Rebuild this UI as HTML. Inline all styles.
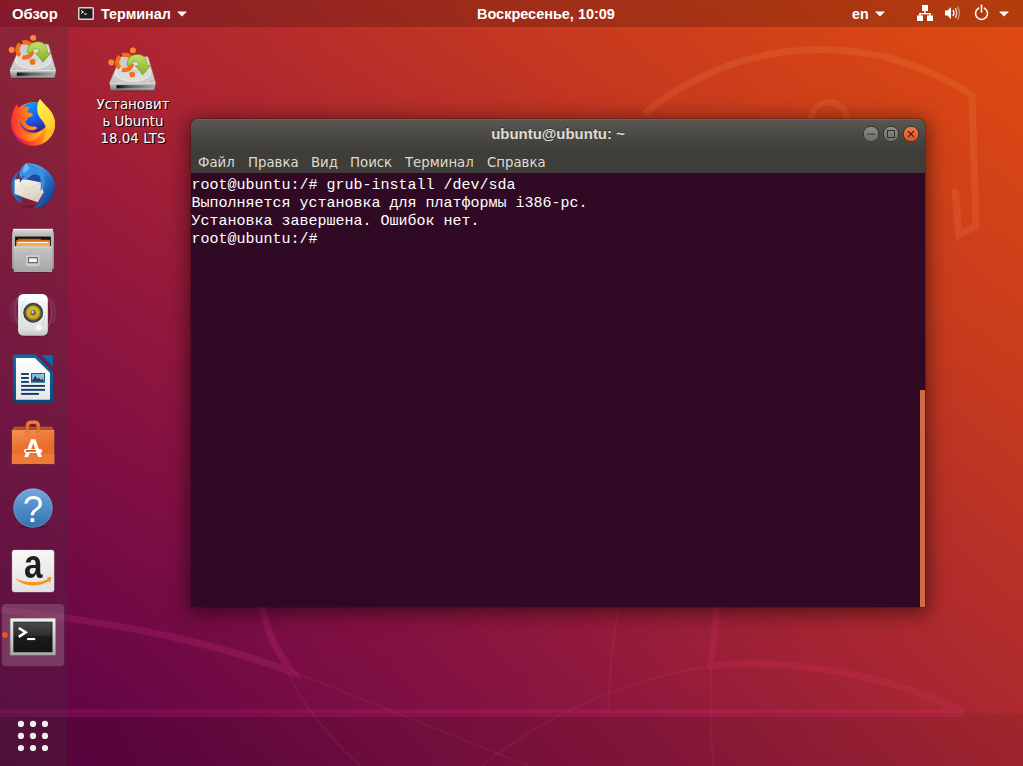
<!DOCTYPE html>
<html lang="ru">
<head>
<meta charset="utf-8">
<title>Ubuntu</title>
<style>
html,body{margin:0;padding:0;}
body{width:1023px;height:766px;overflow:hidden;position:relative;font-family:"Liberation Sans","DejaVu Sans",sans-serif;background:#8a1838;}
#bg{position:absolute;left:0;top:0;width:1023px;height:766px;
background:linear-gradient(to bottom right,rgba(255,0,90,0.05) 0%,rgba(255,0,90,0) 50%,rgba(255,110,0,0.05) 100%),linear-gradient(to top right,#5c0542 0%,#660644 9%,#7a0d44 22%,#8b153f 34%,#a42333 50%,#c63a1e 75%,#e24c10 100%);}
#fold2{position:absolute;left:0;top:713px;width:1023px;height:53px;background:linear-gradient(to right,rgba(0,0,0,0.12),rgba(0,0,0,0.07));}
#topbar{position:absolute;left:0;top:0;width:1023px;height:26.6px;background:rgba(0,0,0,0.2);color:#fff;font-weight:bold;font-size:14.5px;}
#topbar span{position:absolute;top:0;line-height:28.6px;white-space:nowrap;}
#topbar svg{position:absolute;}
#dock{position:absolute;left:0;top:26.6px;width:66px;height:740px;background:rgba(68,52,58,0.25);border-right:1px solid rgba(40,40,40,0.12);}
.ico{position:absolute;left:9px;width:48px;height:48px;overflow:visible;}
#hl{position:absolute;left:2px;top:604px;width:62px;height:62px;border-radius:4px;background:rgba(255,255,255,0.17);}
#dot{position:absolute;left:2px;top:632px;width:6px;height:6px;border-radius:3px;background:#e95420;}
#desk{position:absolute;left:83px;top:96px;width:100px;text-align:center;color:#fff;font-family:"DejaVu Sans","Liberation Sans",sans-serif;font-size:13.4px;line-height:17px;text-shadow:1px 1px 0 rgba(0,0,0,0.9),0 0 2px rgba(0,0,0,0.5);}
#win{position:absolute;left:191px;top:119px;width:734px;height:488px;border-radius:6px 6px 0 0;box-shadow:0 3px 20px 3px rgba(0,0,0,0.5),0 0 0 1px rgba(40,20,20,0.25);background:#300a24;overflow:hidden;}
#title{position:absolute;left:0;top:0;width:734px;height:32px;background:linear-gradient(#5a5851 0%,#4a4843 55%,#3e3d39 100%);box-shadow:inset 0 1px 0 rgba(255,255,255,0.08);}
#title .t{position:absolute;left:0;width:734px;top:0;line-height:30px;text-align:center;color:#dfdbd2;font-weight:bold;font-size:14.96px;text-shadow:0 -1px 0 rgba(0,0,0,0.4);}
.wb{position:absolute;top:6px;width:18px;height:18px;}
#menu{position:absolute;left:0;top:31px;width:734px;height:23px;background:#3e3d39;color:#dfdbd2;font-family:"DejaVu Sans","Liberation Sans",sans-serif;font-size:13.3px;}
#menu span{position:absolute;top:0;line-height:26px;white-space:nowrap;}
#term{position:absolute;left:0;top:54px;width:734px;height:434px;background:#300a24;color:#fff;font-family:"Liberation Mono","DejaVu Sans Mono",monospace;font-size:15px;}
#term div{position:absolute;left:0.5px;height:18px;line-height:18px;white-space:pre;}
#scroll{position:absolute;left:729px;top:271px;width:5px;height:217px;background:#cf6a48;}
</style>
</head>
<body>
<div id="bg"></div>
<div id="fold2"></div>
<svg id="beaver" style="position:absolute;left:0;top:0" width="1023" height="766" viewBox="0 0 1023 766">
<g fill="none" stroke="#ffb060" opacity="0.13" stroke-width="7" stroke-linejoin="miter">
<path d="M644,114 A274.75,274.75 0 0 1 972,95 L976,226 L959,235 L955,189"/>
<circle cx="829" cy="120" r="18" stroke-width="6"/>
</g>
<g fill="none" stroke="#f83878" opacity="0.14" stroke-width="7">
<path d="M717,606 L711,666 C800,656 900,680 963,712"/>
<path d="M0,713.2 H963" stroke-width="7.8" stroke="#ff30a0"/>
<path d="M0,610 C120,622 220,645 292,672 C275,650 266,628 262,606" stroke="#ff4aa0"/>
</g>
<g fill="none" stroke="#ffb090" stroke-opacity="0.06" stroke-width="2">
<path d="M292,671 L529,766"/>
<path d="M288,673 C300,700 330,740 361,766"/>
<path d="M482,766 C530,728 600,685 709,666"/>
<path d="M619,607 C612,640 609,680 609,709"/>
<path d="M711,668 C710,700 711,740 713,766"/>
</g>
</svg>

<div id="topbar">
<span style="left:12px;font-size:14.86px">Обзор</span>
<svg style="left:78px;top:7px" width="16" height="13" viewBox="0 0 16 13"><rect x="0" y="0" width="16" height="13" rx="1.5" fill="#d6d6d2"/><rect x="1.5" y="1.5" width="13" height="10" fill="#1c1c1c"/><path d="M3 3.5 L5.5 5 L3 6.5" stroke="#fff" stroke-width="1" fill="none"/><rect x="6" y="6.5" width="3" height="1" fill="#fff"/></svg>
<span style="left:101px;font-size:14.39px">Терминал</span>
<svg style="left:177px;top:11px" width="10" height="6" viewBox="0 0 10 6"><path d="M0 0.5 H10 L5 5.5 Z" fill="#fff"/></svg>
<span style="left:477px;font-size:14.48px">Воскресенье, 10:09</span>
<span style="left:852px;font-size:14.2px">en</span>
<svg style="left:875px;top:11px" width="10" height="6" viewBox="0 0 10 6"><path d="M0 0.5 H10 L5 5.5 Z" fill="#fff"/></svg>
<svg style="left:917px;top:5px" width="16" height="16" viewBox="0 0 16 16"><g fill="#fff"><rect x="5" y="0" width="6" height="6"/><rect x="7.3" y="6" width="1.4" height="3"/><rect x="2.3" y="8" width="11.4" height="1.4"/><rect x="2.3" y="8" width="1.4" height="3"/><rect x="12.3" y="8" width="1.4" height="3"/><rect x="0" y="10.5" width="6" height="5.5"/><rect x="10" y="10.5" width="6" height="5.5"/></g></svg>
<svg style="left:944px;top:5px" width="17" height="16" viewBox="0 0 17 16"><path d="M1 5.5 H3.5 L7 2 V14 L3.5 10.5 H1 Z" fill="#fff"/><path d="M9 5 Q10.8 8 9 11" stroke="#fff" stroke-width="1.4" fill="none"/><path d="M11.3 3.2 Q14 8 11.3 12.8" stroke="#fff" stroke-width="1.4" fill="none" opacity="0.8"/><path d="M13.6 1.6 Q17.2 8 13.6 14.4" stroke="#fff" stroke-width="1.3" fill="none" opacity="0.45"/></svg>
<svg style="left:973px;top:4px" width="17" height="17" viewBox="0 0 17 17"><path d="M5.6 4.2 A6 6 0 1 0 11.4 4.2" stroke="#fff" stroke-width="1.6" fill="none" stroke-linecap="round"/><path d="M8.5 1.2 V8" stroke="#fff" stroke-width="1.6" stroke-linecap="round"/></svg>
<svg style="left:999px;top:11px" width="10" height="6" viewBox="0 0 10 6"><path d="M0 0.5 H10 L5 5.5 Z" fill="#fff"/></svg>
</div>

<div id="dock">

</div>

<!--ICONS-START-->
<svg id="dockicons" style="position:absolute;left:0;top:0" width="66" height="766" viewBox="0 0 66 766">
<defs>
<linearGradient id="dTop" x1="0" y1="0" x2="0" y2="1"><stop offset="0" stop-color="#e2e2e2"/><stop offset="1" stop-color="#c6c6c6"/></linearGradient>
<linearGradient id="dFront" x1="0" y1="0" x2="0" y2="1"><stop offset="0" stop-color="#d0d0d0"/><stop offset="1" stop-color="#777"/></linearGradient>
<linearGradient id="dSlot" x1="0" y1="0" x2="1" y2="0"><stop offset="0" stop-color="#0a0a0a"/><stop offset="0.35" stop-color="#5a5a5a"/><stop offset="1" stop-color="#a4a4a4"/></linearGradient>
<linearGradient id="gArrow" x1="0" y1="0" x2="0" y2="1"><stop offset="0" stop-color="#c6e06a"/><stop offset="1" stop-color="#7fb02a"/></linearGradient>
<linearGradient id="ffBody" x1="0.95" y1="0.25" x2="0.05" y2="0.75"><stop offset="0" stop-color="#fff04a"/><stop offset="0.3" stop-color="#ffae1f"/><stop offset="0.6" stop-color="#ff681f"/><stop offset="0.85" stop-color="#fa2a3a"/><stop offset="1" stop-color="#d81488"/></linearGradient>
<linearGradient id="ffGlobe" x1="0.3" y1="0" x2="0.6" y2="1"><stop offset="0" stop-color="#0a9bff"/><stop offset="0.55" stop-color="#1560f0"/><stop offset="1" stop-color="#3a1c8a"/></linearGradient>
<linearGradient id="ffHead" x1="0" y1="0.5" x2="1" y2="0.5"><stop offset="0" stop-color="#ff2a34"/><stop offset="0.5" stop-color="#ff7a1a"/><stop offset="1" stop-color="#ffc02a"/></linearGradient>
<linearGradient id="ffFlame" x1="0.3" y1="0" x2="0.7" y2="1"><stop offset="0" stop-color="#fff44f"/><stop offset="0.6" stop-color="#ffd52e"/><stop offset="1" stop-color="#ffa51f"/></linearGradient>
<linearGradient id="tbBody" x1="0.15" y1="0.1" x2="0.85" y2="0.9"><stop offset="0" stop-color="#5fb4ee"/><stop offset="0.5" stop-color="#2a78cc"/><stop offset="1" stop-color="#123a8a"/></linearGradient>
<linearGradient id="tbEnv" x1="0" y1="0" x2="0.4" y2="1"><stop offset="0" stop-color="#faf7f0"/><stop offset="1" stop-color="#d9d0c2"/></linearGradient>
<linearGradient id="flBack" x1="0" y1="0" x2="0" y2="1"><stop offset="0" stop-color="#dcdcdc"/><stop offset="0.14" stop-color="#bdbdbd"/><stop offset="1" stop-color="#9a9a9a"/></linearGradient>
<linearGradient id="flFront" x1="0" y1="0" x2="0" y2="1"><stop offset="0" stop-color="#c4c4c4"/><stop offset="1" stop-color="#a6a6a6"/></linearGradient>
<linearGradient id="flFold" x1="0" y1="0" x2="0" y2="1"><stop offset="0" stop-color="#d8731a"/><stop offset="0.5" stop-color="#f3a03a"/><stop offset="1" stop-color="#f7bd66"/></linearGradient>
<linearGradient id="rbBody" x1="0" y1="0" x2="0" y2="1"><stop offset="0" stop-color="#fafafa"/><stop offset="0.5" stop-color="#ececea"/><stop offset="0.85" stop-color="#dededc"/><stop offset="1" stop-color="#c4c4c2"/></linearGradient>
<radialGradient id="rbCone" cx="0.5" cy="0.45" r="0.6"><stop offset="0" stop-color="#f0d83a"/><stop offset="0.7" stop-color="#c9a80f"/><stop offset="1" stop-color="#8a7208"/></radialGradient>
<linearGradient id="lwPaper" x1="0" y1="0" x2="0" y2="1"><stop offset="0" stop-color="#ffffff"/><stop offset="1" stop-color="#e6e6e6"/></linearGradient>
<linearGradient id="lwBlue" x1="0" y1="0" x2="0" y2="1"><stop offset="0" stop-color="#0d6aa6"/><stop offset="1" stop-color="#074a7c"/></linearGradient>
<linearGradient id="swBag" x1="0" y1="0" x2="0.3" y2="1"><stop offset="0" stop-color="#f3924f"/><stop offset="0.6" stop-color="#e96f2b"/><stop offset="1" stop-color="#e7692a"/></linearGradient>
<linearGradient id="swHandle" x1="0" y1="0" x2="0" y2="1"><stop offset="0" stop-color="#ee7e40"/><stop offset="0.55" stop-color="#e8682a"/><stop offset="1" stop-color="#f08a52"/></linearGradient>
<linearGradient id="hpBody" x1="0" y1="0" x2="0" y2="1"><stop offset="0" stop-color="#79a6de"/><stop offset="0.5" stop-color="#4f8cc6"/><stop offset="1" stop-color="#3672a8"/></linearGradient>
<linearGradient id="amBody" x1="0" y1="0" x2="0.2" y2="1"><stop offset="0" stop-color="#fafafa"/><stop offset="0.6" stop-color="#ececec"/><stop offset="1" stop-color="#e2e2e2"/></linearGradient>
<linearGradient id="tmFrame" x1="0" y1="0" x2="0" y2="1"><stop offset="0" stop-color="#f2f2f0"/><stop offset="1" stop-color="#a9a9a6"/></linearGradient>
<linearGradient id="tmScreen" x1="0" y1="0" x2="0" y2="1"><stop offset="0" stop-color="#4a4a4a"/><stop offset="0.45" stop-color="#2c2c2c"/><stop offset="0.46" stop-color="#1c1c1c"/><stop offset="1" stop-color="#141414"/></linearGradient>
</defs>
<g transform="translate(0,27) scale(0.086162)">
<ellipse cx="385" cy="590" rx="265" ry="14" fill="#000" opacity="0.25"/>
<polygon points="245,200 560,200 648,500 115,500" fill="url(#dTop)" stroke="#a8a8a8" stroke-width="4"/>
<ellipse cx="385" cy="385" rx="205" ry="100" fill="#dcdcdc" stroke="#f6f6f6" stroke-width="8"/>
<ellipse cx="385" cy="375" rx="60" ry="28" fill="#cfcfcf"/>
<circle cx="165" cy="490" r="7" fill="#888"/><circle cx="600" cy="490" r="7" fill="#888"/><circle cx="545" cy="215" r="6" fill="#999"/>
<polygon points="115,500 648,500 638,592 128,592" fill="url(#dFront)"/>
<rect x="195" y="528" width="425" height="48" fill="url(#dSlot)"/>
<rect x="195" y="566" width="425" height="10" fill="#c8c8c8" opacity="0.7"/>
<rect x="115" y="498" width="533" height="8" fill="#ececec"/>
<g fill="#f26e1a">
 <circle cx="290" cy="265" r="62" fill="#cdcdcd"/><circle cx="290" cy="265" r="88" fill="none" stroke="#f26e1a" stroke-width="50" stroke-dasharray="154 30.3" transform="rotate(9.9 290 265)"/>
 <circle cx="135" cy="265" r="33"/><circle cx="385" cy="125" r="33"/><circle cx="378" cy="405" r="33"/>
</g>
<circle cx="135" cy="265" r="33" fill="#f58a3c"/><circle cx="385" cy="125" r="33" fill="#f58a3c"/>
<path d="M316,300 C316,215 368,172 440,172 C512,172 550,228 550,300 L592,300 L500,408 L410,300 L452,300 C452,268 442,250 422,250 C394,250 372,268 366,300 Z" fill="url(#gArrow)" stroke="#6f9a22" stroke-width="7" stroke-linejoin="round"/>
</g>
<g transform="translate(0,90) scale(0.086162)">
<circle cx="385" cy="395" r="253" fill="url(#ffBody)"/>
<circle cx="392" cy="318" r="176" fill="url(#ffGlobe)"/>
<path d="M195,165 C205,200 215,215 240,215 C270,195 310,190 350,200 C330,215 318,235 322,262 C345,262 372,268 384,288 C372,310 345,318 322,318 C322,340 310,352 292,362 C300,395 330,420 368,425 C395,428 418,422 432,440 C410,462 370,475 330,462 C280,445 240,400 236,350 C225,420 270,490 340,505 C395,516 450,500 490,460 C470,560 380,610 300,585 C200,555 130,470 130,370 C130,290 160,215 195,165 Z" fill="url(#ffHead)"/>
<path d="M465,105 C500,150 560,200 605,280 C650,360 650,450 600,525 C570,570 520,610 480,622 C540,560 560,480 520,400 C500,360 470,335 450,300 C430,265 428,200 440,150 C445,135 455,118 465,105 Z" fill="url(#ffFlame)"/>
<path d="M520,400 C548,455 545,520 500,590 C560,560 610,500 625,430 C600,480 560,470 520,400 Z" fill="#ffb81f" opacity="0.9"/>
</g>
<g transform="translate(0,154) scale(0.086162)">
<ellipse cx="385" cy="610" rx="150" ry="14" fill="#000" opacity="0.18"/>
<path d="M300,108 C420,100 560,160 620,290 C665,400 620,540 500,600 C460,622 420,632 385,630 C440,585 470,540 485,490 L505,440 C470,300 400,230 300,108 Z" fill="url(#tbBody)"/>
<path d="M225,185 C150,240 120,330 135,420 C150,490 190,540 245,570 C235,540 235,520 245,505 C200,470 170,420 175,350 C180,290 200,230 225,185 Z" fill="#2a6cc0"/>
<ellipse cx="390" cy="300" rx="135" ry="110" fill="#1c4a9c"/>
<polygon points="170,300 250,285 480,330 505,445 440,560 290,512 168,462" fill="url(#tbEnv)"/>
<path d="M228,318 L300,418 L478,335" fill="none" stroke="#c9c0b0" stroke-width="6"/>
<path d="M300,418 L440,555" fill="none" stroke="#d6cebf" stroke-width="4"/>
<path d="M300,108 C260,140 225,185 222,240 C220,275 228,300 240,318 L250,300 C290,300 330,285 352,258 C380,235 420,230 450,250 C470,262 480,300 470,430 C520,380 540,300 500,220 C460,150 380,112 300,108 Z" fill="#3b8fe0"/>
<path d="M300,108 C275,150 262,190 270,222 C300,215 330,190 345,160 Z" fill="#7cc4f5" opacity="0.8"/>
<path d="M222,240 L232,330 L262,290 Z" fill="#1d4f9c"/>
<circle cx="270" cy="262" r="11" fill="#5a1a10"/><circle cx="272" cy="260" r="5" fill="#e8a020"/>
<path d="M180,480 C200,520 225,550 250,570 C248,545 255,520 270,505 Z" fill="#1f56a8"/>
</g>
<g transform="translate(0,218) scale(0.086162)">
<ellipse cx="385" cy="628" rx="235" ry="10" fill="#000" opacity="0.25"/>
<path d="M155,125 H610 L625,185 V590 H140 V185 Z" fill="url(#flBack)"/>
<rect x="150" y="128" width="465" height="10" fill="#efefef"/>
<rect x="175" y="215" width="415" height="118" fill="#141414"/>
<polygon points="215,240 470,240 480,252 575,252 575,332 205,332 205,252" fill="#c75a12"/>
<rect x="188" y="258" width="392" height="75" fill="url(#flFold)"/>
<rect x="205" y="278" width="355" height="14" fill="#fff6e6"/>
<rect x="160" y="330" width="446" height="298" rx="6" fill="url(#flFront)"/>
<rect x="160" y="330" width="446" height="14" fill="#d8d8d8"/>
<rect x="300" y="430" width="162" height="130" rx="20" fill="#cfcfcf" stroke="#b4b4b4" stroke-width="4"/>
<rect x="326" y="456" width="112" height="68" rx="6" fill="#4a4a4a"/>
<rect x="336" y="466" width="92" height="48" rx="3" fill="#f4f4f4"/>
</g>
<g transform="translate(0,282) scale(0.086162)">
<g fill="none" stroke="#8fa8d8" stroke-width="10" opacity="0.5">
<path d="M255,115 C160,200 160,420 225,520"/><path d="M205,175 C140,260 140,400 190,480" opacity="0.7"/><path d="M150,235 C105,300 105,400 150,470" opacity="0.5"/>
<path d="M545,170 C620,260 620,420 560,520"/><path d="M590,200 C655,290 655,400 610,480" opacity="0.7"/>
</g>
<ellipse cx="385" cy="622" rx="165" ry="12" fill="#000" opacity="0.28"/>
<rect x="210" y="140" width="345" height="485" rx="62" fill="url(#rbBody)"/>
<rect x="222" y="150" width="321" height="70" rx="45" fill="#fff" opacity="0.9"/>
<path d="M300,190 C240,260 235,400 260,470" fill="none" stroke="#a8c0e6" stroke-width="6" opacity="0.8"/>
<path d="M520,390 C520,450 500,500 470,540" fill="none" stroke="#a8c0e6" stroke-width="6" opacity="0.8"/>
<circle cx="385" cy="357" r="116" fill="#3c3c3c"/>
<circle cx="385" cy="357" r="100" fill="#555"/>
<circle cx="385" cy="357" r="84" fill="url(#rbCone)"/>
<circle cx="385" cy="357" r="34" fill="#6a6a6a"/><circle cx="378" cy="348" r="14" fill="#d0d0d0"/>
<circle cx="452" cy="528" r="40" fill="#f6f6f6" stroke="#d4d4d2" stroke-width="5"/>
<circle cx="296" cy="545" r="26" fill="none" stroke="#d6d6d4" stroke-width="5"/>
</g>
<g transform="translate(0,346) scale(0.086162)">
<path d="M185,100 H410 L615,300 V625 Q615,660 580,660 H185 Q150,660 150,625 V135 Q150,100 185,100 Z" fill="url(#lwBlue)"/>
<path d="M475,105 H595 Q615,105 615,125 V245 Z" fill="#0d69a4"/>
<path d="M185,140 H405 L580,310 V625 H185 Z" fill="url(#lwPaper)"/>
<g fill="#0c3c6e">
<rect x="245" y="314" width="90" height="22"/><rect x="245" y="360" width="90" height="22"/><rect x="245" y="406" width="90" height="22"/>
<rect x="245" y="452" width="277" height="22"/><rect x="245" y="498" width="277" height="22"/><rect x="245" y="545" width="207" height="22"/>
</g>
<rect x="360" y="314" width="162" height="112" fill="#0d5c96"/>
<rect x="372" y="326" width="138" height="88" fill="#7cc0f2"/>
<polygon points="372,414 372,400 410,345 435,385 450,365 475,395 490,380 510,405 510,414" fill="#3a3a3a"/>
<polygon points="478,326 510,326 510,360 495,355 482,342" fill="#f2c81e"/>
</g>
<g transform="translate(0,410) scale(0.086162)">
<ellipse cx="385" cy="630" rx="240" ry="9" fill="#000" opacity="0.3"/>
<path d="M300,290 V185 Q300,125 360,125 H402 Q462,125 462,185 V290 H428 V195 Q428,160 395,160 H367 Q334,160 334,195 V290 Z" fill="url(#swHandle)"/>
<polygon points="165,195 600,195 630,240 138,240" fill="#c9591f"/>
<rect x="180" y="205" width="405" height="35" fill="#b34c18"/>
<rect x="138" y="236" width="492" height="392" fill="url(#swBag)"/>
<rect x="138" y="510" width="492" height="118" fill="#ec7a39"/>
<rect x="138" y="236" width="492" height="6" fill="#f7a56c"/>
<path d="M296,294 V185 Q296,121 360,121 H402 Q466,121 466,185 V294 H424 V195 Q424,164 395,164 H367 Q338,164 338,195 V294 Z" fill="#b8501a" opacity="0.55"/><path d="M300,290 V185 Q300,125 360,125 H402 Q462,125 462,185 V290 H428 V195 Q428,160 395,160 H367 Q334,160 334,195 V290 Z" fill="url(#swHandle)"/>
<path d="M360,340 H410 L488,545 H442 L385,385 L328,545 H282 Z" fill="#fff"/>
<rect x="278" y="452" width="212" height="46" rx="23" fill="#fff"/>
<rect x="298" y="464" width="120" height="22" rx="11" fill="#e2500f"/>
</g>
<g transform="translate(0,474) scale(0.086162)">
<ellipse cx="385" cy="612" rx="170" ry="14" fill="#000" opacity="0.25"/>
<circle cx="383" cy="395" r="228" fill="url(#hpBody)"/>
<circle cx="383" cy="395" r="222" fill="none" stroke="#9fc0ea" stroke-width="6" opacity="0.6"/>
<text x="383" y="556" font-family="Liberation Sans, DejaVu Sans, sans-serif" font-size="430" font-weight="normal" fill="#fff" text-anchor="middle">?</text>
</g>
<g transform="translate(0,538) scale(0.086162)">
<rect x="140" y="140" width="488" height="488" rx="26" fill="url(#amBody)" stroke="#c9c9c9" stroke-width="4"/>
<text x="385" y="468" font-family="Liberation Sans, DejaVu Sans, sans-serif" font-size="470" font-weight="bold" fill="#1e1e1e" text-anchor="middle" transform="translate(385 0) scale(0.82 1) translate(-385 0)">a</text>
<path d="M172,460 C260,520 460,530 555,478 L545,458 L597,452 L578,528 L568,500 C450,582 260,562 172,460 Z" fill="#f7941d"/>
</g>
<g transform="translate(0,602) scale(0.086162)">
<rect x="22" y="22" width="723" height="723" rx="45" fill="#fff" opacity="0.17"/>
<circle cx="57" cy="382" r="34" fill="#e95420"/>
<rect x="122" y="610" width="520" height="14" fill="#000" opacity="0.3"/>
<rect x="118" y="188" width="527" height="430" rx="10" fill="url(#tmFrame)" stroke="#8c8c8a" stroke-width="5"/>
<rect x="160" y="232" width="445" height="348" fill="url(#tmScreen)" stroke="#0a0a0a" stroke-width="6"/>
<path d="M218,302 L298,352 L218,405" fill="none" stroke="#fff" stroke-width="30"/>
<rect x="315" y="418" width="94" height="24" fill="#fff"/>
</g>
<g transform="translate(0,700) scale(0.086162)"><circle cx="243" cy="278" r="36" fill="#efefec"/><circle cx="383" cy="278" r="36" fill="#efefec"/><circle cx="522" cy="278" r="36" fill="#efefec"/><circle cx="243" cy="417" r="36" fill="#efefec"/><circle cx="383" cy="417" r="36" fill="#efefec"/><circle cx="522" cy="417" r="36" fill="#efefec"/><circle cx="243" cy="557" r="36" fill="#efefec"/><circle cx="383" cy="557" r="36" fill="#efefec"/><circle cx="522" cy="557" r="36" fill="#efefec"/></g>
</svg>
<svg style="position:absolute;left:0;top:0;overflow:visible" width="200" height="100" viewBox="0 0 200 100"><g transform="translate(99.7,39.6) scale(0.086162)">
<ellipse cx="385" cy="590" rx="265" ry="14" fill="#000" opacity="0.25"/>
<polygon points="245,200 560,200 648,500 115,500" fill="url(#dTop)" stroke="#a8a8a8" stroke-width="4"/>
<ellipse cx="385" cy="385" rx="205" ry="100" fill="#dcdcdc" stroke="#f6f6f6" stroke-width="8"/>
<ellipse cx="385" cy="375" rx="60" ry="28" fill="#cfcfcf"/>
<circle cx="165" cy="490" r="7" fill="#888"/><circle cx="600" cy="490" r="7" fill="#888"/><circle cx="545" cy="215" r="6" fill="#999"/>
<polygon points="115,500 648,500 638,592 128,592" fill="url(#dFront)"/>
<rect x="195" y="528" width="425" height="48" fill="url(#dSlot)"/>
<rect x="195" y="566" width="425" height="10" fill="#c8c8c8" opacity="0.7"/>
<rect x="115" y="498" width="533" height="8" fill="#ececec"/>
<g fill="#f26e1a">
 <circle cx="290" cy="265" r="62" fill="#cdcdcd"/><circle cx="290" cy="265" r="88" fill="none" stroke="#f26e1a" stroke-width="50" stroke-dasharray="154 30.3" transform="rotate(9.9 290 265)"/>
 <circle cx="135" cy="265" r="33"/><circle cx="385" cy="125" r="33"/><circle cx="378" cy="405" r="33"/>
</g>
<circle cx="135" cy="265" r="33" fill="#f58a3c"/><circle cx="385" cy="125" r="33" fill="#f58a3c"/>
<path d="M316,300 C316,215 368,172 440,172 C512,172 550,228 550,300 L592,300 L500,408 L410,300 L452,300 C452,268 442,250 422,250 C394,250 372,268 366,300 Z" fill="url(#gArrow)" stroke="#6f9a22" stroke-width="7" stroke-linejoin="round"/>
</g>
</svg>
<!--ICONS-END-->
<div id="desk">Установит<br>ь Ubuntu<br>18.04 LTS</div>

<div id="win">
 <div id="title"><div class="t">ubuntu@ubuntu: ~</div>
  <svg class="wb" style="left:671px" viewBox="-1 -1 18 18"><defs><linearGradient id="gb" x1="0" y1="0" x2="0" y2="1"><stop offset="0" stop-color="#918f89"/><stop offset="1" stop-color="#6a6862"/></linearGradient><linearGradient id="gc" x1="0" y1="0" x2="0" y2="1"><stop offset="0" stop-color="#f27c4c"/><stop offset="1" stop-color="#dd5226"/></linearGradient></defs><circle cx="8" cy="8.4" r="8.4" fill="#5d5b55" opacity="0.6"/><circle cx="8" cy="8" r="7.8" fill="url(#gb)" stroke="#33322e" stroke-width="1"/><rect x="3.9" y="7.6" width="8.2" height="1" fill="#33322e"/></svg>
  <svg class="wb" style="left:691px" viewBox="-1 -1 18 18"><circle cx="8" cy="8.4" r="8.4" fill="#5d5b55" opacity="0.6"/><circle cx="8" cy="8" r="7.8" fill="url(#gb)" stroke="#33322e" stroke-width="1"/><rect x="4.5" y="4.5" width="7" height="7" fill="none" stroke="#33322e" stroke-width="1"/></svg>
  <svg class="wb" style="left:711px" viewBox="-1 -1 18 18"><circle cx="8" cy="8.4" r="8.4" fill="#5d5b55" opacity="0.6"/><circle cx="8" cy="8" r="7.8" fill="url(#gc)" stroke="#4a2a1c" stroke-width="1"/><path d="M5 5 L11 11 M11 5 L5 11" stroke="#3a2a20" stroke-width="1.1"/></svg>
 </div>
 <div id="menu">
  <span style="left:7px">Файл</span><span style="left:57px">Правка</span><span style="left:120px">Вид</span><span style="left:159px">Поиск</span><span style="left:214px">Терминал</span><span style="left:296px">Справка</span>
 </div>
 <div id="term">
  <div style="top:4px">root@ubuntu:/# grub-install /dev/sda</div>
  <div style="top:22px">Выполняется установка для платформы i386-pc.</div>
  <div style="top:40px">Установка завершена. Ошибок нет.</div>
  <div style="top:58px">root@ubuntu:/# </div>
 </div>
 <div id="scroll"></div>
</div>
</body>
</html>
